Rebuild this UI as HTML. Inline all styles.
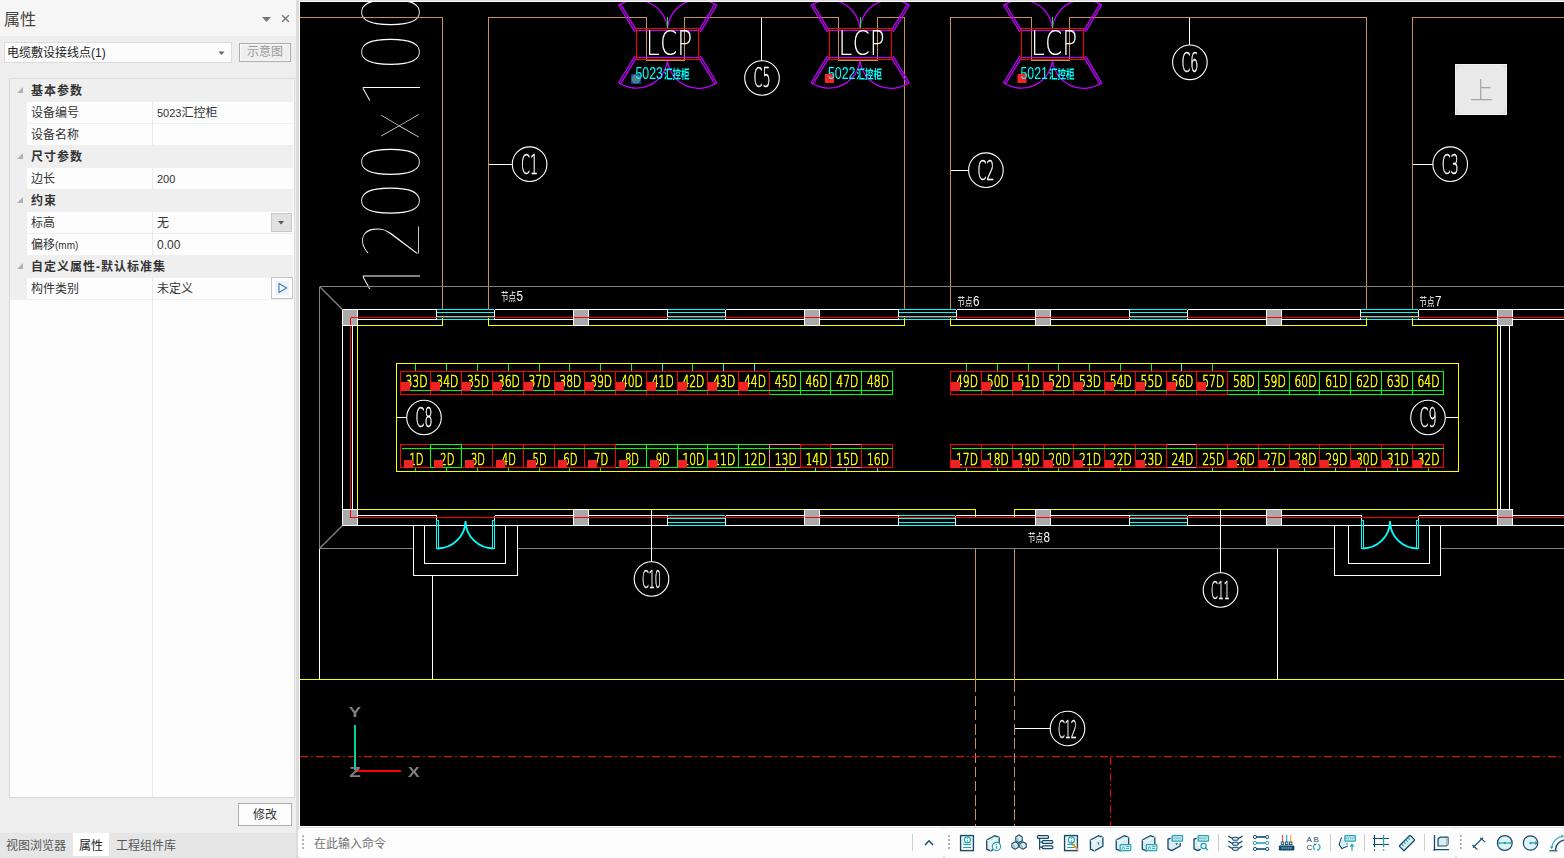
<!DOCTYPE html>
<html lang="zh-CN">
<head>
<meta charset="utf-8">
<title>属性</title>
<style>
html,body{margin:0;padding:0;}
body{width:1564px;height:858px;overflow:hidden;position:relative;background:#eeeeee;font-family:"Liberation Sans","Noto Sans CJK SC",sans-serif;font-size:12px;color:#333;}
.abs{position:absolute;}
#panel{left:0;top:0;width:296px;height:858px;background:#eeeeee;}
#ptitle{left:0;top:0;width:296px;height:36px;background:#f6f6f6;}
#ptitle .t{position:absolute;left:4px;top:9px;font-size:16px;line-height:22px;color:#444;}
#combo{left:4px;top:42px;width:228px;height:21px;background:#fcfcfc;border:1px solid #dcdcdc;box-sizing:border-box;}
#combo span{position:absolute;left:2px;top:1px;line-height:19px;font-size:12px;color:#222;}
#sybtn{left:239px;top:43px;width:52px;height:19px;box-sizing:border-box;border:1px solid #adadad;background:#efefef;color:#9a9a9a;font-size:12px;line-height:17px;text-align:center;box-shadow:inset 0 0 0 1px #f8f8f8;}
#grid{left:9px;top:78px;width:286px;height:720px;box-sizing:border-box;border:1px solid #dadada;background:#fdfdfd;}
.row{position:absolute;left:0;width:283px;height:22px;box-sizing:border-box;}
.cat{background:#efefef;height:23px;margin-top:-1px;padding-top:1px;font-weight:bold;color:#333;}
.cat span{position:absolute;left:21px;top:1px;line-height:22px;letter-spacing:1px;white-space:nowrap;}
.cat i{position:absolute;left:7px;top:8px;width:0;height:0;border-left:6px solid transparent;border-bottom:6px solid #b0b0b0;}
.pr{border-bottom:1px solid #f0f0f0;}
.pr:after{content:'';position:absolute;left:142px;top:0;width:1px;height:22px;background:#eaeaea;}
.pr .n{position:absolute;left:21px;top:0;line-height:22px;color:#333;}
.pr .v{position:absolute;left:147px;top:0;line-height:22px;color:#333;}
#gutter{left:0;top:0;width:17px;height:221px;background:#efefef;}
#split{left:142px;top:221px;width:1px;height:497px;background:#eaeaea;}
#tabs{left:0;top:833px;width:298px;height:25px;background:#e6e6e6;}
#tabs span{position:absolute;top:1px;line-height:24px;font-size:12px;color:#555;}
#cmd{left:298px;top:828px;width:1266px;height:30px;background:#fdfdfd;border-radius:4px 0 0 4px;}
.nolight .big{stroke-width:5.8px}
.nolight .lcp{stroke:#000;stroke-width:1.7px}
.nolight .cir{stroke-width:0}
.nolight .lab{stroke-width:0}
</style>
<script>
(function(){try{var c=document.createElement('canvas');c.width=60;c.height=120;var x=c.getContext('2d');
x.font='200 100px "DejaVu Sans Light","DejaVu Sans",sans-serif';x.fillStyle='#000';x.fillText('l',10,100);
var d=x.getImageData(0,50,60,1).data,n=0;for(var i=3;i<d.length;i+=4){if(d[i]>127)n++;}
if(n>7){document.documentElement.className='nolight';}}catch(e){}})();
</script>
</head>
<body>
<div id="panel" class="abs">
  <div id="ptitle" class="abs"><span class="t">属性</span>
    <svg class="abs" style="left:258px;top:10px" width="36" height="16" viewBox="258 10 36 16"><path d="M262 17h9l-4.5 5z" fill="#777"/><path d="M282.2 15.2l6.6 6.6M288.8 15.2l-6.6 6.6" stroke="#777" stroke-width="1.4" fill="none"/></svg>
  </div>
  <div id="combo" class="abs"><span>电缆敷设接线点(1)</span>
    <svg class="abs" style="left:213px;top:8px" width="8" height="5"><path d="M0.5 0.5h6l-3 3.5z" fill="#666"/></svg>
  </div>
  <div id="sybtn" class="abs">示意图</div>
  <div id="grid" class="abs">
    <div id="gutter" class="abs"></div>
    <div class="row cat" style="top:1px"><i></i><span>基本参数</span></div>
    <div class="row pr" style="top:23px"><span class="n">设备编号</span><span class="v"><span style="font-size:11px">5023</span>汇控柜</span></div>
    <div class="row pr" style="top:45px"><span class="n">设备名称</span></div>
    <div class="row cat" style="top:67px"><i></i><span>尺寸参数</span></div>
    <div class="row pr" style="top:89px"><span class="n">边长</span><span class="v" style="font-size:11px">200</span></div>
    <div class="row cat" style="top:111px"><i></i><span>约束</span></div>
    <div class="row pr" style="top:133px"><span class="n">标高</span><span class="v">无</span></div>
    <div class="row pr" style="top:155px"><span class="n">偏移<span style="font-size:10px">(mm)</span></span><span class="v">0.00</span></div>
    <div class="row cat" style="top:177px"><i></i><span>自定义属性-默认标准集</span></div>
    <div class="row pr" style="top:199px"><span class="n">构件类别</span><span class="v">未定义</span></div>
    <div id="split" class="abs"></div>
    <div class="abs" style="left:261px;top:134px;width:21px;height:19px;box-sizing:border-box;background:#e1e1e1;border:1px solid #c8c8c8;"><svg class="abs" style="left:6px;top:7px" width="7" height="4"><path d="M0 0h6l-3 3.5z" fill="#555"/></svg></div>
    <div class="abs" style="left:261px;top:198px;width:22px;height:22px;box-sizing:border-box;background:#fdfdfd;border:1px solid #c4c4c4;"><div class="abs" style="left:3px;top:3px;width:14px;height:14px;background:#eef2f6"></div><svg class="abs" style="left:5px;top:4px" width="12" height="12" viewBox="0 0 12 12"><path d="M2 1.5v9l7.5-4.5z" fill="#f4f9fd" stroke="#2f7fc0" stroke-width="1.1"/></svg></div>
  </div>
  <div class="abs" style="left:238px;top:803px;width:54px;height:23px;box-sizing:border-box;border:1px solid #adadad;background:#fdfdfd;text-align:center;line-height:23px;font-size:12px;color:#333;">修改</div>
  <div id="tabs" class="abs">
    <span style="left:6px">视图浏览器</span>
    <div class="abs" style="left:73px;top:0;width:36px;height:23px;background:#fff;"></div>
    <span style="left:79px;color:#222">属性</span>
    <span style="left:116px">工程组件库</span>
  </div>
</div>
<div class="abs" style="left:296px;top:0;width:1268px;height:858px;background:#dcdcdc;"></div>
<div class="abs" style="left:299px;top:1px;width:1265px;height:826px;background:#fff;"></div>
<div class="abs" style="left:300px;top:2px;width:1264px;height:824px;background:#000"></div>
<svg class="abs" style="left:300px;top:2px;will-change:transform" width="1264" height="824" viewBox="300 2 1264 824">
<clipPath id="nobase"><rect x="300" y="0" width="119.9" height="300"/></clipPath>
<g clip-path="url(#nobase)"><text transform="translate(424 277) rotate(-90) scale(0.78 1.078)" class="big" text-anchor="middle" font-size="79.5" fill="#fff" stroke="#000" stroke-width="2.4" font-weight="200" font-family="'DejaVu Sans Light','DejaVu Sans', sans-serif">1</text></g>
<text transform="translate(419.5 239) rotate(-90) scale(0.78 1)" class="big" text-anchor="middle" font-size="79.5" fill="#fff" stroke="#000" stroke-width="2.4" font-weight="200" font-family="'DejaVu Sans Light','DejaVu Sans', sans-serif">2</text>
<text transform="translate(419.5 200.5) rotate(-90) scale(0.78 1)" class="big" text-anchor="middle" font-size="79.5" fill="#fff" stroke="#000" stroke-width="2.4" font-weight="200" font-family="'DejaVu Sans Light','DejaVu Sans', sans-serif">0</text>
<text transform="translate(419.5 161.7) rotate(-90) scale(0.78 1)" class="big" text-anchor="middle" font-size="79.5" fill="#fff" stroke="#000" stroke-width="2.4" font-weight="200" font-family="'DejaVu Sans Light','DejaVu Sans', sans-serif">0</text>
<text transform="translate(419.5 125.7) rotate(-90) scale(0.78 1)" class="big" text-anchor="middle" font-size="72.3" fill="#fff" stroke="#000" stroke-width="2.4" font-weight="200" font-family="'DejaVu Sans Light','DejaVu Sans', sans-serif">x</text>
<g clip-path="url(#nobase)"><text transform="translate(424 88.6) rotate(-90) scale(0.78 1.078)" class="big" text-anchor="middle" font-size="79.5" fill="#fff" stroke="#000" stroke-width="2.4" font-weight="200" font-family="'DejaVu Sans Light','DejaVu Sans', sans-serif">1</text></g>
<text transform="translate(419.5 51.7) rotate(-90) scale(0.78 1)" class="big" text-anchor="middle" font-size="79.5" fill="#fff" stroke="#000" stroke-width="2.4" font-weight="200" font-family="'DejaVu Sans Light','DejaVu Sans', sans-serif">0</text>
<text transform="translate(419.5 12) rotate(-90) scale(0.78 1)" class="big" text-anchor="middle" font-size="79.5" fill="#fff" stroke="#000" stroke-width="2.4" font-weight="200" font-family="'DejaVu Sans Light','DejaVu Sans', sans-serif">0</text>
<g shape-rendering="crispEdges" fill="none">
<path d="M319.5 548.5L319.5 679.5" stroke="#ffffff" stroke-width="1" />
<path d="M432.5 575.5L432.5 679.5" stroke="#ffffff" stroke-width="1" />
<path d="M1277.5 548.5L1277.5 679.5" stroke="#ffffff" stroke-width="1" />
<path d="M300 679.5L1564 679.5" stroke="#ffff00" stroke-width="1" />
<path d="M357.5 509.5L975.5 509.5L975.5 517" stroke="#ffff00" stroke-width="1" fill="none" />
<path d="M1014.5 517L1014.5 509.5L1497.5 509.5" stroke="#ffff00" stroke-width="1" fill="none" />
<path d="M357.5 325.5L357.5 509.5" stroke="#ffff00" stroke-width="1" />
<path d="M1497.5 325.5L1497.5 509.5" stroke="#ffff00" stroke-width="1" />
<path d="M342.5 325.5L342.5 509.5" stroke="#ffffff" stroke-width="1" />
<path d="M352.5 325.5L352.5 509.5" stroke="#ffffff" stroke-width="1" />
<path d="M1500.5 325.5L1500.5 509.5" stroke="#ffffff" stroke-width="1" />
<path d="M1509.5 325.5L1509.5 509.5" stroke="#ffffff" stroke-width="1" />
<path d="M358.0 309.5L436.5 309.5" stroke="#ffffff" stroke-width="1" />
<path d="M358.0 319.5L436.5 319.5" stroke="#ffffff" stroke-width="1" />
<path d="M494.5 309.5L573.5 309.5" stroke="#ffffff" stroke-width="1" />
<path d="M494.5 319.5L573.5 319.5" stroke="#ffffff" stroke-width="1" />
<path d="M589.0 309.5L667.5 309.5" stroke="#ffffff" stroke-width="1" />
<path d="M589.0 319.5L667.5 319.5" stroke="#ffffff" stroke-width="1" />
<path d="M725.5 309.5L804.5 309.5" stroke="#ffffff" stroke-width="1" />
<path d="M725.5 319.5L804.5 319.5" stroke="#ffffff" stroke-width="1" />
<path d="M820.0 309.5L898.5 309.5" stroke="#ffffff" stroke-width="1" />
<path d="M820.0 319.5L898.5 319.5" stroke="#ffffff" stroke-width="1" />
<path d="M956.5 309.5L1035.5 309.5" stroke="#ffffff" stroke-width="1" />
<path d="M956.5 319.5L1035.5 319.5" stroke="#ffffff" stroke-width="1" />
<path d="M1051.0 309.5L1129.5 309.5" stroke="#ffffff" stroke-width="1" />
<path d="M1051.0 319.5L1129.5 319.5" stroke="#ffffff" stroke-width="1" />
<path d="M1187.5 309.5L1266.5 309.5" stroke="#ffffff" stroke-width="1" />
<path d="M1187.5 319.5L1266.5 319.5" stroke="#ffffff" stroke-width="1" />
<path d="M1282.0 309.5L1360.5 309.5" stroke="#ffffff" stroke-width="1" />
<path d="M1282.0 319.5L1360.5 319.5" stroke="#ffffff" stroke-width="1" />
<path d="M1418.5 309.5L1497.5 309.5" stroke="#ffffff" stroke-width="1" />
<path d="M1418.5 319.5L1497.5 319.5" stroke="#ffffff" stroke-width="1" />
<path d="M1513.0 309.5L1565 309.5" stroke="#ffffff" stroke-width="1" />
<path d="M1513.0 319.5L1565 319.5" stroke="#ffffff" stroke-width="1" />
<path d="M436.5 309.5L436.5 319.5" stroke="#ffffff" stroke-width="1" />
<path d="M494.5 309.5L494.5 319.5" stroke="#ffffff" stroke-width="1" />
<path d="M437.0 309.5L494.0 309.5" stroke="#00ffff" stroke-width="1" />
<path d="M437.0 312.5L494.0 312.5" stroke="#00ffff" stroke-width="1" />
<path d="M437.0 316.5L494.0 316.5" stroke="#00ffff" stroke-width="1" />
<path d="M437.0 319.5L494.0 319.5" stroke="#00ffff" stroke-width="1" />
<path d="M667.5 309.5L667.5 319.5" stroke="#ffffff" stroke-width="1" />
<path d="M725.5 309.5L725.5 319.5" stroke="#ffffff" stroke-width="1" />
<path d="M668.0 309.5L725.0 309.5" stroke="#00ffff" stroke-width="1" />
<path d="M668.0 312.5L725.0 312.5" stroke="#00ffff" stroke-width="1" />
<path d="M668.0 316.5L725.0 316.5" stroke="#00ffff" stroke-width="1" />
<path d="M668.0 319.5L725.0 319.5" stroke="#00ffff" stroke-width="1" />
<path d="M898.5 309.5L898.5 319.5" stroke="#ffffff" stroke-width="1" />
<path d="M956.5 309.5L956.5 319.5" stroke="#ffffff" stroke-width="1" />
<path d="M899.0 309.5L956.0 309.5" stroke="#00ffff" stroke-width="1" />
<path d="M899.0 312.5L956.0 312.5" stroke="#00ffff" stroke-width="1" />
<path d="M899.0 316.5L956.0 316.5" stroke="#00ffff" stroke-width="1" />
<path d="M899.0 319.5L956.0 319.5" stroke="#00ffff" stroke-width="1" />
<path d="M1129.5 309.5L1129.5 319.5" stroke="#ffffff" stroke-width="1" />
<path d="M1187.5 309.5L1187.5 319.5" stroke="#ffffff" stroke-width="1" />
<path d="M1130.0 309.5L1187.0 309.5" stroke="#00ffff" stroke-width="1" />
<path d="M1130.0 312.5L1187.0 312.5" stroke="#00ffff" stroke-width="1" />
<path d="M1130.0 316.5L1187.0 316.5" stroke="#00ffff" stroke-width="1" />
<path d="M1130.0 319.5L1187.0 319.5" stroke="#00ffff" stroke-width="1" />
<path d="M1360.5 309.5L1360.5 319.5" stroke="#ffffff" stroke-width="1" />
<path d="M1418.5 309.5L1418.5 319.5" stroke="#ffffff" stroke-width="1" />
<path d="M1361.0 309.5L1418.0 309.5" stroke="#00ffff" stroke-width="1" />
<path d="M1361.0 312.5L1418.0 312.5" stroke="#00ffff" stroke-width="1" />
<path d="M1361.0 316.5L1418.0 316.5" stroke="#00ffff" stroke-width="1" />
<path d="M1361.0 319.5L1418.0 319.5" stroke="#00ffff" stroke-width="1" />
<path d="M357.5 325.5L442.5 325.5L442.5 316" stroke="#ffff00" stroke-width="1" fill="none" />
<path d="M488.5 316L488.5 325.5L904.5 325.5L904.5 316" stroke="#ffff00" stroke-width="1" fill="none" />
<path d="M950.5 316L950.5 325.5L1366.5 325.5L1366.5 316" stroke="#ffff00" stroke-width="1" fill="none" />
<path d="M1412.5 316L1412.5 325.5L1497.5 325.5" stroke="#ffff00" stroke-width="1" fill="none" />
<path d="M358.0 515.5L436.5 515.5" stroke="#ffffff" stroke-width="1" />
<path d="M494.5 515.5L573.5 515.5" stroke="#ffffff" stroke-width="1" />
<path d="M589.0 515.5L667.5 515.5" stroke="#ffffff" stroke-width="1" />
<path d="M725.5 515.5L804.5 515.5" stroke="#ffffff" stroke-width="1" />
<path d="M820.0 515.5L898.5 515.5" stroke="#ffffff" stroke-width="1" />
<path d="M955.5 515.5L1035.5 515.5" stroke="#ffffff" stroke-width="1" />
<path d="M1051.0 515.5L1129.5 515.5" stroke="#ffffff" stroke-width="1" />
<path d="M1187.5 515.5L1266.5 515.5" stroke="#ffffff" stroke-width="1" />
<path d="M1282.0 515.5L1361.5 515.5" stroke="#ffffff" stroke-width="1" />
<path d="M1418.5 515.5L1497.5 515.5" stroke="#ffffff" stroke-width="1" />
<path d="M1513.0 515.5L1565 515.5" stroke="#ffffff" stroke-width="1" />
<path d="M342.5 525.5L1564 525.5" stroke="#ffffff" stroke-width="1" />
<path d="M436.5 515.5L436.5 525.5" stroke="#ffffff" stroke-width="1" />
<path d="M494.5 515.5L494.5 525.5" stroke="#ffffff" stroke-width="1" />
<path d="M667.5 515.5L667.5 525.5" stroke="#ffffff" stroke-width="1" />
<path d="M725.5 515.5L725.5 525.5" stroke="#ffffff" stroke-width="1" />
<path d="M898.5 515.5L898.5 525.5" stroke="#ffffff" stroke-width="1" />
<path d="M955.5 515.5L955.5 525.5" stroke="#ffffff" stroke-width="1" />
<path d="M1129.5 515.5L1129.5 525.5" stroke="#ffffff" stroke-width="1" />
<path d="M1187.5 515.5L1187.5 525.5" stroke="#ffffff" stroke-width="1" />
<path d="M1361.5 515.5L1361.5 525.5" stroke="#ffffff" stroke-width="1" />
<path d="M1418.5 515.5L1418.5 525.5" stroke="#ffffff" stroke-width="1" />
<path d="M668.0 515.5L725.0 515.5" stroke="#00ffff" stroke-width="1" />
<path d="M668.0 518.5L725.0 518.5" stroke="#00ffff" stroke-width="1" />
<path d="M668.0 522.5L725.0 522.5" stroke="#00ffff" stroke-width="1" />
<path d="M668.0 525.5L725.0 525.5" stroke="#00ffff" stroke-width="1" />
<path d="M899.0 515.5L955.0 515.5" stroke="#00ffff" stroke-width="1" />
<path d="M899.0 518.5L955.0 518.5" stroke="#00ffff" stroke-width="1" />
<path d="M899.0 522.5L955.0 522.5" stroke="#00ffff" stroke-width="1" />
<path d="M899.0 525.5L955.0 525.5" stroke="#00ffff" stroke-width="1" />
<path d="M1130.0 515.5L1187.0 515.5" stroke="#00ffff" stroke-width="1" />
<path d="M1130.0 518.5L1187.0 518.5" stroke="#00ffff" stroke-width="1" />
<path d="M1130.0 522.5L1187.0 522.5" stroke="#00ffff" stroke-width="1" />
<path d="M1130.0 525.5L1187.0 525.5" stroke="#00ffff" stroke-width="1" />
<path d="M1564 317.5L350.5 317.5L350.5 517.5L1564 517.5" stroke="#ff0000" stroke-width="1" fill="none" />
<rect x="342.5" y="309.5" width="15" height="16" fill="#a9a9a9" stroke="#ffffff"/>
<path d="M350.5 317.5L358.0 317.5" stroke="#ff0000" stroke-width="1" />
<rect x="342.5" y="509.5" width="15" height="16" fill="#a9a9a9" stroke="#ffffff"/>
<path d="M350.5 517.5L358.0 517.5" stroke="#ff0000" stroke-width="1" />
<rect x="573.5" y="309.5" width="15" height="16" fill="#a9a9a9" stroke="#ffffff"/>
<path d="M574.0 317.5L589.0 317.5" stroke="#ff0000" stroke-width="1" />
<rect x="573.5" y="509.5" width="15" height="16" fill="#a9a9a9" stroke="#ffffff"/>
<path d="M574.0 517.5L589.0 517.5" stroke="#ff0000" stroke-width="1" />
<rect x="804.5" y="309.5" width="15" height="16" fill="#a9a9a9" stroke="#ffffff"/>
<path d="M805.0 317.5L820.0 317.5" stroke="#ff0000" stroke-width="1" />
<rect x="804.5" y="509.5" width="15" height="16" fill="#a9a9a9" stroke="#ffffff"/>
<path d="M805.0 517.5L820.0 517.5" stroke="#ff0000" stroke-width="1" />
<rect x="1035.5" y="309.5" width="15" height="16" fill="#a9a9a9" stroke="#ffffff"/>
<path d="M1036.0 317.5L1051.0 317.5" stroke="#ff0000" stroke-width="1" />
<rect x="1035.5" y="509.5" width="15" height="16" fill="#a9a9a9" stroke="#ffffff"/>
<path d="M1036.0 517.5L1051.0 517.5" stroke="#ff0000" stroke-width="1" />
<rect x="1266.5" y="309.5" width="15" height="16" fill="#a9a9a9" stroke="#ffffff"/>
<path d="M1267.0 317.5L1282.0 317.5" stroke="#ff0000" stroke-width="1" />
<rect x="1266.5" y="509.5" width="15" height="16" fill="#a9a9a9" stroke="#ffffff"/>
<path d="M1267.0 517.5L1282.0 517.5" stroke="#ff0000" stroke-width="1" />
<rect x="1497.5" y="309.5" width="15" height="16" fill="#a9a9a9" stroke="#ffffff"/>
<path d="M1498.0 317.5L1513.0 317.5" stroke="#ff0000" stroke-width="1" />
<rect x="1497.5" y="509.5" width="15" height="16" fill="#a9a9a9" stroke="#ffffff"/>
<path d="M1498.0 517.5L1513.0 517.5" stroke="#ff0000" stroke-width="1" />
<path d="M350.5 317.5L350.5 325" stroke="#ff0000" stroke-width="1" />
<path d="M350.5 510L350.5 517.5" stroke="#ff0000" stroke-width="1" />
<path d="M300 17.5L442.5 17.5L442.5 310" stroke="#c8915a" stroke-width="1" fill="none" />
<path d="M488.5 310L488.5 17.5L646.5 17.5L646.5 60.5L684.5 60.5L684.5 17.5L838.5 17.5L838.5 60.5L877.5 60.5L877.5 17.5L904.5 17.5L904.5 310" stroke="#c8915a" stroke-width="1" fill="none" />
<path d="M950.5 310L950.5 17.5L1031.5 17.5L1031.5 60.5L1069.5 60.5L1069.5 17.5L1366.5 17.5L1366.5 310" stroke="#c8915a" stroke-width="1" fill="none" />
<path d="M1412.5 310L1412.5 17.5L1564 17.5" stroke="#c8915a" stroke-width="1" fill="none" />
<path d="M975.5 548.5L975.5 682" stroke="#c8915a" stroke-width="1" />
<path d="M975.5 667.3L975.5 826" stroke="#c8915a" stroke-width="1" stroke-dasharray="10.5 3.7"/>
<path d="M1014.5 548.5L1014.5 682" stroke="#c8915a" stroke-width="1" />
<path d="M1014.5 667.3L1014.5 826" stroke="#c8915a" stroke-width="1" stroke-dasharray="10.5 3.7"/>
<path d="M319.5 286.5L1564 286.5" stroke="#808080" stroke-width="1" />
<path d="M319.5 286.5L319.5 548.5" stroke="#808080" stroke-width="1" />
<path d="M319.5 548.5L413.5 548.5" stroke="#808080" stroke-width="1" />
<path d="M517.5 548.5L1334.5 548.5" stroke="#808080" stroke-width="1" />
<path d="M1440.5 548.5L1564 548.5" stroke="#808080" stroke-width="1" />
<path d="M413.5 525.5L413.5 575.5L517.5 575.5L517.5 525.5" stroke="#ffffff" stroke-width="1" fill="none" />
<path d="M424.5 525.5L424.5 563.5L505.5 563.5L505.5 525.5" stroke="#ffffff" stroke-width="1" fill="none" />
<path d="M1334.5 525.5L1334.5 575.5L1440.5 575.5L1440.5 525.5" stroke="#ffffff" stroke-width="1" fill="none" />
<path d="M1348.5 525.5L1348.5 563.5L1429.5 563.5L1429.5 525.5" stroke="#ffffff" stroke-width="1" fill="none" />
</g>
<path d="M319.5 286.5L342.5 309.5M319.5 548.5L342.5 525.5" stroke="#808080" stroke-width="1.4" fill="none"/>
<g stroke="#00ffff" fill="none"><path shape-rendering="crispEdges" d="M436.5 520.5H438.5V548.5H436.5ZM494.5 520.5H492.5V548.5H494.5Z" stroke-width="1"/><path d="M437.5 548.5A28.0 28.0 0 0 0 465.5 521M493.5 548.5A28.0 28.0 0 0 1 465.5 521" stroke-width="1.8"/></g>
<g stroke="#00ffff" fill="none"><path shape-rendering="crispEdges" d="M1361.5 520.5H1363.5V548.5H1361.5ZM1418.5 520.5H1416.5V548.5H1418.5Z" stroke-width="1"/><path d="M1362.5 548.5A27.5 27.5 0 0 0 1390.0 521M1417.5 548.5A27.5 27.5 0 0 1 1390.0 521" stroke-width="1.8"/></g>
<path d="M636.8 30.9L620.5 4.1L618.7 5.3L635.0 32.1M619.6 4.7A31.4 31.4 0 0 1 667.5 28.5M635.0 55.9L618.7 82.7L620.5 83.9L636.8 57.1M619.6 83.3A31.4 31.4 0 0 0 667.5 60.5M700.4 32.1L716.7 5.3L714.9 4.1L698.6 30.9M715.8 4.7A31.4 31.4 0 0 0 667.5 28.5M698.6 57.1L714.9 83.9L716.7 82.7L700.4 55.9M715.8 83.3A31.4 31.4 0 0 1 667.5 60.5" stroke="#c000ff" stroke-width="1.3" fill="none"/>
<g shape-rendering="crispEdges" fill="none"><path d="M636.5 30.5H698.5M636.5 57.5H698.5" stroke="#c000ff"/><rect x="636.5" y="28.5" width="62" height="31" stroke="#ff0000"/><path d="M667.5 17V28" stroke="#00ff00"/></g>
<path d="M829.3 30.9L813.0 4.1L811.2 5.3L827.5 32.1M812.1 4.7A31.4 31.4 0 0 1 860.0 28.5M827.5 55.9L811.2 82.7L813.0 83.9L829.3 57.1M812.1 83.3A31.4 31.4 0 0 0 860.0 60.5M892.9 32.1L909.2 5.3L907.4 4.1L891.1 30.9M908.3 4.7A31.4 31.4 0 0 0 860.0 28.5M891.1 57.1L907.4 83.9L909.2 82.7L892.9 55.9M908.3 83.3A31.4 31.4 0 0 1 860.0 60.5" stroke="#c000ff" stroke-width="1.3" fill="none"/>
<g shape-rendering="crispEdges" fill="none"><path d="M829.0 30.5H891.0M829.0 57.5H891.0" stroke="#c000ff"/><rect x="829.0" y="28.5" width="62" height="31" stroke="#ff0000"/><path d="M860 17V28" stroke="#00ff00"/></g>
<path d="M1021.8 30.9L1005.5 4.1L1003.7 5.3L1020.0 32.1M1004.6 4.7A31.4 31.4 0 0 1 1052.5 28.5M1020.0 55.9L1003.7 82.7L1005.5 83.9L1021.8 57.1M1004.6 83.3A31.4 31.4 0 0 0 1052.5 60.5M1085.4 32.1L1101.7 5.3L1099.9 4.1L1083.6 30.9M1100.8 4.7A31.4 31.4 0 0 0 1052.5 28.5M1083.6 57.1L1099.9 83.9L1101.7 82.7L1085.4 55.9M1100.8 83.3A31.4 31.4 0 0 1 1052.5 60.5" stroke="#c000ff" stroke-width="1.3" fill="none"/>
<g shape-rendering="crispEdges" fill="none"><path d="M1021.5 30.5H1083.5M1021.5 57.5H1083.5" stroke="#c000ff"/><rect x="1021.5" y="28.5" width="62" height="31" stroke="#ff0000"/><path d="M1052.5 17V28" stroke="#00ff00"/></g>
<text x="646.1" y="55" class="lcp" font-size="33" textLength="46" lengthAdjust="spacingAndGlyphs" fill="#fff" font-weight="200" font-family="'DejaVu Sans Light','DejaVu Sans', sans-serif">LCP</text>
<rect x="631.0" y="74" width="10" height="10" fill="#0a3cb4"/><circle cx="636.0" cy="79" r="4.6" fill="#4d8080"/>
<text x="635.5" y="78.5" font-size="16.5" textLength="27.5" lengthAdjust="spacingAndGlyphs" fill="#00ffff" font-family="'Liberation Sans', sans-serif">5023</text>
<text x="664.0" y="78.5" font-size="12.5" textLength="25.5" lengthAdjust="spacingAndGlyphs" fill="#00ffff" font-weight="bold" font-family="'Liberation Sans','Noto Sans CJK SC', sans-serif">汇控柜</text>
<text x="838.6" y="55" class="lcp" font-size="33" textLength="46" lengthAdjust="spacingAndGlyphs" fill="#fff" font-weight="200" font-family="'DejaVu Sans Light','DejaVu Sans', sans-serif">LCP</text>
<rect x="825" y="74" width="9" height="9" fill="#ff2020"/>
<text x="828" y="78.5" font-size="16.5" textLength="27.5" lengthAdjust="spacingAndGlyphs" fill="#00ffff" font-family="'Liberation Sans', sans-serif">5022</text>
<text x="856.5" y="78.5" font-size="12.5" textLength="25.5" lengthAdjust="spacingAndGlyphs" fill="#00ffff" font-weight="bold" font-family="'Liberation Sans','Noto Sans CJK SC', sans-serif">汇控柜</text>
<text x="1031.1" y="55" class="lcp" font-size="33" textLength="46" lengthAdjust="spacingAndGlyphs" fill="#fff" font-weight="200" font-family="'DejaVu Sans Light','DejaVu Sans', sans-serif">LCP</text>
<rect x="1017.5" y="74" width="9" height="9" fill="#ff2020"/>
<text x="1020.5" y="78.5" font-size="16.5" textLength="27.5" lengthAdjust="spacingAndGlyphs" fill="#00ffff" font-family="'Liberation Sans', sans-serif">5021</text>
<text x="1049.0" y="78.5" font-size="12.5" textLength="25.5" lengthAdjust="spacingAndGlyphs" fill="#00ffff" font-weight="bold" font-family="'Liberation Sans','Noto Sans CJK SC', sans-serif">汇控柜</text>
<path d="M488.5 164.5L512 164.5" stroke="#fff" shape-rendering="crispEdges"/>
<circle cx="529.6" cy="164.2" r="17.3" stroke="#fff" stroke-width="1.1" fill="none"/>
<text x="521.1" y="173.617" font-size="25.8" textLength="17" class="cir" lengthAdjust="spacingAndGlyphs" fill="#fff" stroke="#fff" stroke-width="0.5" font-weight="200" font-family="'DejaVu Sans Light','DejaVu Sans', sans-serif">C1</text>
<path d="M950.5 170.5L968 170.5" stroke="#fff" shape-rendering="crispEdges"/>
<circle cx="985.9" cy="170.2" r="17.3" stroke="#fff" stroke-width="1.1" fill="none"/>
<text x="977.4" y="179.617" font-size="25.8" textLength="17" class="cir" lengthAdjust="spacingAndGlyphs" fill="#fff" stroke="#fff" stroke-width="0.5" font-weight="200" font-family="'DejaVu Sans Light','DejaVu Sans', sans-serif">C2</text>
<path d="M1412.5 164.5L1433 164.5" stroke="#fff" shape-rendering="crispEdges"/>
<circle cx="1450.2" cy="164.2" r="17.3" stroke="#fff" stroke-width="1.1" fill="none"/>
<text x="1441.7" y="173.617" font-size="25.8" textLength="17" class="cir" lengthAdjust="spacingAndGlyphs" fill="#fff" stroke="#fff" stroke-width="0.5" font-weight="200" font-family="'DejaVu Sans Light','DejaVu Sans', sans-serif">C3</text>
<path d="M761.5 17.5L761.5 60.5" stroke="#fff" shape-rendering="crispEdges"/>
<circle cx="762" cy="78" r="17.3" stroke="#fff" stroke-width="1.1" fill="none"/>
<text x="753.5" y="87.417" font-size="25.8" textLength="17" class="cir" lengthAdjust="spacingAndGlyphs" fill="#fff" stroke="#fff" stroke-width="0.5" font-weight="200" font-family="'DejaVu Sans Light','DejaVu Sans', sans-serif">C5</text>
<path d="M1189.5 17.5L1189.5 45" stroke="#fff" shape-rendering="crispEdges"/>
<circle cx="1189.9" cy="62.3" r="17.3" stroke="#fff" stroke-width="1.1" fill="none"/>
<text x="1181.4" y="71.717" font-size="25.8" textLength="17" class="cir" lengthAdjust="spacingAndGlyphs" fill="#fff" stroke="#fff" stroke-width="0.5" font-weight="200" font-family="'DejaVu Sans Light','DejaVu Sans', sans-serif">C6</text>
<path d="M396.5 417.5L406.5 417.5" stroke="#fff" shape-rendering="crispEdges"/>
<circle cx="424" cy="417.5" r="17.3" stroke="#fff" stroke-width="1.1" fill="none"/>
<text x="415.5" y="426.917" font-size="25.8" textLength="17" class="cir" lengthAdjust="spacingAndGlyphs" fill="#fff" stroke="#fff" stroke-width="0.5" font-weight="200" font-family="'DejaVu Sans Light','DejaVu Sans', sans-serif">C8</text>
<path d="M1445.5 417.5L1458.5 417.5" stroke="#fff" shape-rendering="crispEdges"/>
<circle cx="1428" cy="417.5" r="17.3" stroke="#fff" stroke-width="1.1" fill="none"/>
<text x="1419.5" y="426.917" font-size="25.8" textLength="17" class="cir" lengthAdjust="spacingAndGlyphs" fill="#fff" stroke="#fff" stroke-width="0.5" font-weight="200" font-family="'DejaVu Sans Light','DejaVu Sans', sans-serif">C9</text>
<path d="M651.5 509.5L651.5 561.5" stroke="#fff" shape-rendering="crispEdges"/>
<circle cx="651.5" cy="579" r="17.3" stroke="#fff" stroke-width="1.1" fill="none"/>
<text x="642.0" y="588.125" font-size="25" textLength="19" class="cir" lengthAdjust="spacingAndGlyphs" fill="#fff" stroke="#fff" stroke-width="0.5" font-weight="200" font-family="'DejaVu Sans Light','DejaVu Sans', sans-serif">C10</text>
<path d="M1220.5 509.5L1220.5 572.5" stroke="#fff" shape-rendering="crispEdges"/>
<circle cx="1220.5" cy="590" r="17.3" stroke="#fff" stroke-width="1.1" fill="none"/>
<text x="1211.0" y="599.125" font-size="25" textLength="19" class="cir" lengthAdjust="spacingAndGlyphs" fill="#fff" stroke="#fff" stroke-width="0.5" font-weight="200" font-family="'DejaVu Sans Light','DejaVu Sans', sans-serif">C11</text>
<path d="M1014.5 728.5L1050.5 728.5" stroke="#fff" shape-rendering="crispEdges"/>
<circle cx="1067.5" cy="728.5" r="17.3" stroke="#fff" stroke-width="1.1" fill="none"/>
<text x="1058.0" y="737.625" font-size="25" textLength="19" class="cir" lengthAdjust="spacingAndGlyphs" fill="#fff" stroke="#fff" stroke-width="0.5" font-weight="200" font-family="'DejaVu Sans Light','DejaVu Sans', sans-serif">C12</text>
<text x="501" y="300.7" font-size="11" textLength="15" lengthAdjust="spacingAndGlyphs" fill="#fff" font-family="'Liberation Sans','Noto Sans CJK SC', sans-serif">节点</text>
<text x="516.5" y="300.7" font-size="15.5" textLength="6.5" lengthAdjust="spacingAndGlyphs" fill="#fff" font-family="'Liberation Sans', sans-serif">5</text>
<text x="957.5" y="306" font-size="11" textLength="15" lengthAdjust="spacingAndGlyphs" fill="#fff" font-family="'Liberation Sans','Noto Sans CJK SC', sans-serif">节点</text>
<text x="973.0" y="306" font-size="15.5" textLength="6.5" lengthAdjust="spacingAndGlyphs" fill="#fff" font-family="'Liberation Sans', sans-serif">6</text>
<text x="1419.5" y="306.3" font-size="11" textLength="15" lengthAdjust="spacingAndGlyphs" fill="#fff" font-family="'Liberation Sans','Noto Sans CJK SC', sans-serif">节点</text>
<text x="1435.0" y="306.3" font-size="15.5" textLength="6.5" lengthAdjust="spacingAndGlyphs" fill="#fff" font-family="'Liberation Sans', sans-serif">7</text>
<text x="1028" y="541.5" font-size="11" textLength="15" lengthAdjust="spacingAndGlyphs" fill="#fff" font-family="'Liberation Sans','Noto Sans CJK SC', sans-serif">节点</text>
<text x="1043.5" y="541.5" font-size="15.5" textLength="6.5" lengthAdjust="spacingAndGlyphs" fill="#fff" font-family="'Liberation Sans', sans-serif">8</text>
<g shape-rendering="crispEdges" fill="none">
<rect x="396.5" y="363.5" width="1062" height="108" fill="none" stroke="#ffff00"/>
<rect x="769.5" y="371.5" width="31.0" height="23.0" fill="none" stroke="#00ff00"/>
<rect x="800.5" y="371.5" width="30.0" height="23.0" fill="none" stroke="#00ff00"/>
<rect x="830.5" y="371.5" width="31.0" height="23.0" fill="none" stroke="#00ff00"/>
<rect x="861.5" y="371.5" width="31.0" height="23.0" fill="none" stroke="#00ff00"/>
<rect x="400.5" y="371.5" width="30.0" height="23.0" fill="none" stroke="#ff0000"/>
<rect x="430.5" y="371.5" width="31.0" height="23.0" fill="none" stroke="#ff0000"/>
<rect x="461.5" y="371.5" width="31.0" height="23.0" fill="none" stroke="#ff0000"/>
<rect x="492.5" y="371.5" width="31.0" height="23.0" fill="none" stroke="#ff0000"/>
<rect x="523.5" y="371.5" width="31.0" height="23.0" fill="none" stroke="#ff0000"/>
<rect x="554.5" y="371.5" width="30.0" height="23.0" fill="none" stroke="#ff0000"/>
<rect x="584.5" y="371.5" width="31.0" height="23.0" fill="none" stroke="#ff0000"/>
<rect x="615.5" y="371.5" width="31.0" height="23.0" fill="none" stroke="#ff0000"/>
<rect x="646.5" y="371.5" width="31.0" height="23.0" fill="none" stroke="#ff0000"/>
<rect x="677.5" y="371.5" width="30.0" height="23.0" fill="none" stroke="#ff0000"/>
<rect x="707.5" y="371.5" width="31.0" height="23.0" fill="none" stroke="#ff0000"/>
<rect x="738.5" y="371.5" width="31.0" height="23.0" fill="none" stroke="#ff0000"/>
<path d="M401.5 390.5L431.5 390.5" stroke="#00ff00" stroke-width="1" />
<path d="M415.5 364L415.5 371" stroke="#00ff00" stroke-width="1" />
<path d="M431.5 390.5L462.5 390.5" stroke="#00ff00" stroke-width="1" />
<path d="M446.5 364L446.5 371" stroke="#00ff00" stroke-width="1" />
<path d="M462.5 390.5L493.5 390.5" stroke="#00ff00" stroke-width="1" />
<path d="M477.5 364L477.5 371" stroke="#00ff00" stroke-width="1" />
<path d="M493.5 390.5L524.5 390.5" stroke="#00ff00" stroke-width="1" />
<path d="M508.5 364L508.5 371" stroke="#00ff00" stroke-width="1" />
<path d="M524.5 390.5L555.5 390.5" stroke="#00ff00" stroke-width="1" />
<path d="M539.5 364L539.5 371" stroke="#00ff00" stroke-width="1" />
<path d="M555.5 390.5L585.5 390.5" stroke="#00ff00" stroke-width="1" />
<path d="M569.5 364L569.5 371" stroke="#00ff00" stroke-width="1" />
<path d="M585.5 390.5L616.5 390.5" stroke="#00ff00" stroke-width="1" />
<path d="M600.5 364L600.5 371" stroke="#00ff00" stroke-width="1" />
<path d="M616.5 390.5L647.5 390.5" stroke="#00ff00" stroke-width="1" />
<path d="M631.5 364L631.5 371" stroke="#00ff00" stroke-width="1" />
<path d="M647.5 390.5L678.5 390.5" stroke="#00ff00" stroke-width="1" />
<path d="M662.5 364L662.5 371" stroke="#00ffff" stroke-width="1" />
<path d="M678.5 390.5L708.5 390.5" stroke="#00ff00" stroke-width="1" />
<path d="M692.5 364L692.5 371" stroke="#00ff00" stroke-width="1" />
<path d="M708.5 390.5L739.5 390.5" stroke="#00ff00" stroke-width="1" />
<path d="M723.5 364L723.5 371" stroke="#00ffff" stroke-width="1" />
<path d="M739.5 390.5L770.5 390.5" stroke="#00ff00" stroke-width="1" />
<path d="M754.5 364L754.5 371" stroke="#00ffff" stroke-width="1" />
<path d="M770.5 390.5L801.5 390.5" stroke="#00ff00" stroke-width="1" />
<path d="M801.5 390.5L831.5 390.5" stroke="#00ff00" stroke-width="1" />
<path d="M831.5 390.5L862.5 390.5" stroke="#00ff00" stroke-width="1" />
<path d="M862.5 390.5L892.5 390.5" stroke="#00ff00" stroke-width="1" />
<rect x="430.5" y="444.5" width="31.0" height="23.0" fill="none" stroke="#00ff00"/>
<rect x="615.5" y="444.5" width="31.0" height="23.0" fill="none" stroke="#00ff00"/>
<rect x="646.5" y="444.5" width="31.0" height="23.0" fill="none" stroke="#00ff00"/>
<rect x="677.5" y="444.5" width="30.0" height="23.0" fill="none" stroke="#00ff00"/>
<rect x="707.5" y="444.5" width="31.0" height="23.0" fill="none" stroke="#00ff00"/>
<rect x="738.5" y="444.5" width="31.0" height="23.0" fill="none" stroke="#00ff00"/>
<rect x="769.5" y="444.5" width="31.0" height="23.0" fill="none" stroke="#ff80a8"/>
<rect x="830.5" y="444.5" width="31.0" height="23.0" fill="none" stroke="#ff80a8"/>
<rect x="400.5" y="444.5" width="30.0" height="23.0" fill="none" stroke="#ff0000"/>
<rect x="461.5" y="444.5" width="31.0" height="23.0" fill="none" stroke="#ff0000"/>
<rect x="492.5" y="444.5" width="31.0" height="23.0" fill="none" stroke="#ff0000"/>
<rect x="523.5" y="444.5" width="31.0" height="23.0" fill="none" stroke="#ff0000"/>
<rect x="554.5" y="444.5" width="30.0" height="23.0" fill="none" stroke="#ff0000"/>
<rect x="584.5" y="444.5" width="31.0" height="23.0" fill="none" stroke="#ff0000"/>
<rect x="800.5" y="444.5" width="30.0" height="23.0" fill="none" stroke="#ff0000"/>
<rect x="861.5" y="444.5" width="31.0" height="23.0" fill="none" stroke="#ff0000"/>
<path d="M401.5 448.5L431.5 448.5" stroke="#00ff00" stroke-width="1" />
<path d="M415.5 468L415.5 471" stroke="#00ff00" stroke-width="1" />
<rect x="430.5" y="444.5" width="31.0" height="23.0" fill="none" stroke="#00ff00"/>
<path d="M431.5 448.5L462.5 448.5" stroke="#00ff00" stroke-width="1" />
<path d="M446.5 468L446.5 471" stroke="#00ff00" stroke-width="1" />
<path d="M462.5 448.5L493.5 448.5" stroke="#00ff00" stroke-width="1" />
<path d="M477.5 468L477.5 471" stroke="#00ff00" stroke-width="1" />
<path d="M493.5 448.5L524.5 448.5" stroke="#00ff00" stroke-width="1" />
<path d="M508.5 468L508.5 471" stroke="#00ff00" stroke-width="1" />
<path d="M524.5 448.5L555.5 448.5" stroke="#00ff00" stroke-width="1" />
<path d="M539.5 468L539.5 471" stroke="#00ff00" stroke-width="1" />
<path d="M555.5 448.5L585.5 448.5" stroke="#00ff00" stroke-width="1" />
<path d="M569.5 468L569.5 471" stroke="#00ff00" stroke-width="1" />
<path d="M585.5 448.5L616.5 448.5" stroke="#00ff00" stroke-width="1" />
<path d="M600.5 468L600.5 471" stroke="#00ff00" stroke-width="1" />
<path d="M616.5 448.5L647.5 448.5" stroke="#00ff00" stroke-width="1" />
<path d="M647.5 448.5L678.5 448.5" stroke="#00ff00" stroke-width="1" />
<path d="M678.5 448.5L708.5 448.5" stroke="#00ff00" stroke-width="1" />
<path d="M708.5 448.5L739.5 448.5" stroke="#00ff00" stroke-width="1" />
<path d="M739.5 448.5L770.5 448.5" stroke="#00ff00" stroke-width="1" />
<path d="M770.5 448.5L801.5 448.5" stroke="#00ff00" stroke-width="1" />
<path d="M785.5 468L785.5 471" stroke="#00ff00" stroke-width="1" />
<path d="M801.5 448.5L831.5 448.5" stroke="#00ff00" stroke-width="1" />
<path d="M815.5 468L815.5 471" stroke="#00ffff" stroke-width="1" />
<path d="M831.5 448.5L862.5 448.5" stroke="#00ff00" stroke-width="1" />
<path d="M846.5 468L846.5 471" stroke="#00ff00" stroke-width="1" />
<path d="M862.5 448.5L892.5 448.5" stroke="#00ff00" stroke-width="1" />
<path d="M877.5 468L877.5 471" stroke="#00ffff" stroke-width="1" />
<rect x="1227.5" y="371.5" width="31.0" height="23.0" fill="none" stroke="#00ff00"/>
<rect x="1258.5" y="371.5" width="31.0" height="23.0" fill="none" stroke="#00ff00"/>
<rect x="1289.5" y="371.5" width="30.0" height="23.0" fill="none" stroke="#00ff00"/>
<rect x="1319.5" y="371.5" width="31.0" height="23.0" fill="none" stroke="#00ff00"/>
<rect x="1350.5" y="371.5" width="31.0" height="23.0" fill="none" stroke="#00ff00"/>
<rect x="1381.5" y="371.5" width="31.0" height="23.0" fill="none" stroke="#00ff00"/>
<rect x="1412.5" y="371.5" width="31.0" height="23.0" fill="none" stroke="#00ff00"/>
<rect x="950.5" y="371.5" width="31.0" height="23.0" fill="none" stroke="#ff0000"/>
<rect x="981.5" y="371.5" width="31.0" height="23.0" fill="none" stroke="#ff0000"/>
<rect x="1012.5" y="371.5" width="31.0" height="23.0" fill="none" stroke="#ff0000"/>
<rect x="1043.5" y="371.5" width="30.0" height="23.0" fill="none" stroke="#ff0000"/>
<rect x="1073.5" y="371.5" width="31.0" height="23.0" fill="none" stroke="#ff0000"/>
<rect x="1104.5" y="371.5" width="31.0" height="23.0" fill="none" stroke="#ff0000"/>
<rect x="1135.5" y="371.5" width="31.0" height="23.0" fill="none" stroke="#ff0000"/>
<rect x="1166.5" y="371.5" width="30.0" height="23.0" fill="none" stroke="#ff0000"/>
<rect x="1196.5" y="371.5" width="31.0" height="23.0" fill="none" stroke="#ff0000"/>
<path d="M951.5 390.5L982.5 390.5" stroke="#00ff00" stroke-width="1" />
<path d="M966.5 364L966.5 371" stroke="#00ff00" stroke-width="1" />
<path d="M982.5 390.5L1013.5 390.5" stroke="#00ff00" stroke-width="1" />
<path d="M997.5 364L997.5 371" stroke="#00ff00" stroke-width="1" />
<path d="M1013.5 390.5L1044.5 390.5" stroke="#00ff00" stroke-width="1" />
<path d="M1028.5 364L1028.5 371" stroke="#00ff00" stroke-width="1" />
<path d="M1044.5 390.5L1074.5 390.5" stroke="#00ff00" stroke-width="1" />
<path d="M1058.5 364L1058.5 371" stroke="#00ff00" stroke-width="1" />
<path d="M1074.5 390.5L1105.5 390.5" stroke="#00ff00" stroke-width="1" />
<path d="M1089.5 364L1089.5 371" stroke="#00ff00" stroke-width="1" />
<path d="M1105.5 390.5L1136.5 390.5" stroke="#00ff00" stroke-width="1" />
<path d="M1120.5 364L1120.5 371" stroke="#00ff00" stroke-width="1" />
<path d="M1136.5 390.5L1167.5 390.5" stroke="#00ff00" stroke-width="1" />
<path d="M1151.5 364L1151.5 371" stroke="#00ff00" stroke-width="1" />
<path d="M1167.5 390.5L1197.5 390.5" stroke="#00ff00" stroke-width="1" />
<path d="M1181.5 364L1181.5 371" stroke="#00ffff" stroke-width="1" />
<path d="M1197.5 390.5L1228.5 390.5" stroke="#00ff00" stroke-width="1" />
<path d="M1212.5 364L1212.5 371" stroke="#00ff00" stroke-width="1" />
<path d="M1228.5 390.5L1259.5 390.5" stroke="#00ff00" stroke-width="1" />
<path d="M1259.5 390.5L1290.5 390.5" stroke="#00ff00" stroke-width="1" />
<path d="M1290.5 390.5L1320.5 390.5" stroke="#00ff00" stroke-width="1" />
<path d="M1320.5 390.5L1351.5 390.5" stroke="#00ff00" stroke-width="1" />
<path d="M1351.5 390.5L1382.5 390.5" stroke="#00ff00" stroke-width="1" />
<path d="M1382.5 390.5L1413.5 390.5" stroke="#00ff00" stroke-width="1" />
<path d="M1413.5 390.5L1443.5 390.5" stroke="#00ff00" stroke-width="1" />
<rect x="1166.5" y="444.5" width="30.0" height="23.0" fill="none" stroke="#ff80a8"/>
<rect x="950.5" y="444.5" width="31.0" height="23.0" fill="none" stroke="#ff0000"/>
<rect x="981.5" y="444.5" width="31.0" height="23.0" fill="none" stroke="#ff0000"/>
<rect x="1012.5" y="444.5" width="31.0" height="23.0" fill="none" stroke="#ff0000"/>
<rect x="1043.5" y="444.5" width="30.0" height="23.0" fill="none" stroke="#ff0000"/>
<rect x="1073.5" y="444.5" width="31.0" height="23.0" fill="none" stroke="#ff0000"/>
<rect x="1104.5" y="444.5" width="31.0" height="23.0" fill="none" stroke="#ff0000"/>
<rect x="1135.5" y="444.5" width="31.0" height="23.0" fill="none" stroke="#ff0000"/>
<rect x="1196.5" y="444.5" width="31.0" height="23.0" fill="none" stroke="#ff0000"/>
<rect x="1227.5" y="444.5" width="31.0" height="23.0" fill="none" stroke="#ff0000"/>
<rect x="1258.5" y="444.5" width="31.0" height="23.0" fill="none" stroke="#ff0000"/>
<rect x="1289.5" y="444.5" width="30.0" height="23.0" fill="none" stroke="#ff0000"/>
<rect x="1319.5" y="444.5" width="31.0" height="23.0" fill="none" stroke="#ff0000"/>
<rect x="1350.5" y="444.5" width="31.0" height="23.0" fill="none" stroke="#ff0000"/>
<rect x="1381.5" y="444.5" width="31.0" height="23.0" fill="none" stroke="#ff0000"/>
<rect x="1412.5" y="444.5" width="31.0" height="23.0" fill="none" stroke="#ff0000"/>
<path d="M951.5 448.5L982.5 448.5" stroke="#00ff00" stroke-width="1" />
<path d="M966.5 468L966.5 471" stroke="#00ff00" stroke-width="1" />
<path d="M982.5 448.5L1013.5 448.5" stroke="#00ff00" stroke-width="1" />
<path d="M997.5 468L997.5 471" stroke="#00ff00" stroke-width="1" />
<path d="M1013.5 448.5L1044.5 448.5" stroke="#00ff00" stroke-width="1" />
<path d="M1028.5 468L1028.5 471" stroke="#00ff00" stroke-width="1" />
<path d="M1044.5 448.5L1074.5 448.5" stroke="#00ff00" stroke-width="1" />
<path d="M1058.5 468L1058.5 471" stroke="#00ff00" stroke-width="1" />
<path d="M1074.5 448.5L1105.5 448.5" stroke="#00ff00" stroke-width="1" />
<path d="M1089.5 468L1089.5 471" stroke="#00ff00" stroke-width="1" />
<path d="M1105.5 448.5L1136.5 448.5" stroke="#00ff00" stroke-width="1" />
<path d="M1120.5 468L1120.5 471" stroke="#00ff00" stroke-width="1" />
<path d="M1136.5 448.5L1167.5 448.5" stroke="#00ff00" stroke-width="1" />
<path d="M1167.5 448.5L1197.5 448.5" stroke="#00ff00" stroke-width="1" />
<path d="M1197.5 448.5L1228.5 448.5" stroke="#00ff00" stroke-width="1" />
<path d="M1212.5 468L1212.5 471" stroke="#00ffff" stroke-width="1" />
<path d="M1228.5 448.5L1259.5 448.5" stroke="#00ff00" stroke-width="1" />
<path d="M1243.5 468L1243.5 471" stroke="#00ff00" stroke-width="1" />
<path d="M1259.5 448.5L1290.5 448.5" stroke="#00ff00" stroke-width="1" />
<path d="M1274.5 468L1274.5 471" stroke="#00ffff" stroke-width="1" />
<path d="M1290.5 448.5L1320.5 448.5" stroke="#00ff00" stroke-width="1" />
<path d="M1304.5 468L1304.5 471" stroke="#00ffff" stroke-width="1" />
<path d="M1320.5 448.5L1351.5 448.5" stroke="#00ff00" stroke-width="1" />
<path d="M1335.5 468L1335.5 471" stroke="#00ffff" stroke-width="1" />
<path d="M1351.5 448.5L1382.5 448.5" stroke="#00ff00" stroke-width="1" />
<path d="M1366.5 468L1366.5 471" stroke="#00ffff" stroke-width="1" />
<path d="M1382.5 448.5L1413.5 448.5" stroke="#00ff00" stroke-width="1" />
<path d="M1397.5 468L1397.5 471" stroke="#00ffff" stroke-width="1" />
<path d="M1413.5 448.5L1443.5 448.5" stroke="#00ff00" stroke-width="1" />
<path d="M1428.5 468L1428.5 471" stroke="#00ff00" stroke-width="1" />
</g>
<g class="lab" fill="#ffff00"  stroke="#ffff00" stroke-width="0.6" font-weight="200" font-family="'DejaVu Sans Light','DejaVu Sans', sans-serif">
<text x="405.5" y="387.2" font-size="16.4" textLength="22" lengthAdjust="spacingAndGlyphs">33D</text>
<text x="436.3" y="387.2" font-size="16.4" textLength="22" lengthAdjust="spacingAndGlyphs">34D</text>
<text x="467.0" y="387.2" font-size="16.4" textLength="22" lengthAdjust="spacingAndGlyphs">35D</text>
<text x="497.8" y="387.2" font-size="16.4" textLength="22" lengthAdjust="spacingAndGlyphs">36D</text>
<text x="528.6" y="387.2" font-size="16.4" textLength="22" lengthAdjust="spacingAndGlyphs">37D</text>
<text x="559.3" y="387.2" font-size="16.4" textLength="22" lengthAdjust="spacingAndGlyphs">38D</text>
<text x="590.1" y="387.2" font-size="16.4" textLength="22" lengthAdjust="spacingAndGlyphs">39D</text>
<text x="620.9" y="387.2" font-size="16.4" textLength="22" lengthAdjust="spacingAndGlyphs">40D</text>
<text x="651.7" y="387.2" font-size="16.4" textLength="22" lengthAdjust="spacingAndGlyphs">41D</text>
<text x="682.4" y="387.2" font-size="16.4" textLength="22" lengthAdjust="spacingAndGlyphs">42D</text>
<text x="713.2" y="387.2" font-size="16.4" textLength="22" lengthAdjust="spacingAndGlyphs">43D</text>
<text x="744.0" y="387.2" font-size="16.4" textLength="22" lengthAdjust="spacingAndGlyphs">44D</text>
<text x="774.7" y="387.2" font-size="16.4" textLength="22" lengthAdjust="spacingAndGlyphs">45D</text>
<text x="805.5" y="387.2" font-size="16.4" textLength="22" lengthAdjust="spacingAndGlyphs">46D</text>
<text x="836.3" y="387.2" font-size="16.4" textLength="22" lengthAdjust="spacingAndGlyphs">47D</text>
<text x="867.0" y="387.2" font-size="16.4" textLength="22" lengthAdjust="spacingAndGlyphs">48D</text>
<text x="409.5" y="464.8" font-size="16.4" textLength="14" lengthAdjust="spacingAndGlyphs">1D</text>
<text x="440.3" y="464.8" font-size="16.4" textLength="14" lengthAdjust="spacingAndGlyphs">2D</text>
<text x="471.0" y="464.8" font-size="16.4" textLength="14" lengthAdjust="spacingAndGlyphs">3D</text>
<text x="501.8" y="464.8" font-size="16.4" textLength="14" lengthAdjust="spacingAndGlyphs">4D</text>
<text x="532.6" y="464.8" font-size="16.4" textLength="14" lengthAdjust="spacingAndGlyphs">5D</text>
<text x="563.3" y="464.8" font-size="16.4" textLength="14" lengthAdjust="spacingAndGlyphs">6D</text>
<text x="594.1" y="464.8" font-size="16.4" textLength="14" lengthAdjust="spacingAndGlyphs">7D</text>
<text x="624.9" y="464.8" font-size="16.4" textLength="14" lengthAdjust="spacingAndGlyphs">8D</text>
<text x="655.7" y="464.8" font-size="16.4" textLength="14" lengthAdjust="spacingAndGlyphs">9D</text>
<text x="682.4" y="464.8" font-size="16.4" textLength="22" lengthAdjust="spacingAndGlyphs">10D</text>
<text x="713.2" y="464.8" font-size="16.4" textLength="22" lengthAdjust="spacingAndGlyphs">11D</text>
<text x="744.0" y="464.8" font-size="16.4" textLength="22" lengthAdjust="spacingAndGlyphs">12D</text>
<text x="774.7" y="464.8" font-size="16.4" textLength="22" lengthAdjust="spacingAndGlyphs">13D</text>
<text x="805.5" y="464.8" font-size="16.4" textLength="22" lengthAdjust="spacingAndGlyphs">14D</text>
<text x="836.3" y="464.8" font-size="16.4" textLength="22" lengthAdjust="spacingAndGlyphs">15D</text>
<text x="867.0" y="464.8" font-size="16.4" textLength="22" lengthAdjust="spacingAndGlyphs">16D</text>
<text x="956.0" y="387.2" font-size="16.4" textLength="22" lengthAdjust="spacingAndGlyphs">49D</text>
<text x="986.8" y="387.2" font-size="16.4" textLength="22" lengthAdjust="spacingAndGlyphs">50D</text>
<text x="1017.5" y="387.2" font-size="16.4" textLength="22" lengthAdjust="spacingAndGlyphs">51D</text>
<text x="1048.3" y="387.2" font-size="16.4" textLength="22" lengthAdjust="spacingAndGlyphs">52D</text>
<text x="1079.1" y="387.2" font-size="16.4" textLength="22" lengthAdjust="spacingAndGlyphs">53D</text>
<text x="1109.8" y="387.2" font-size="16.4" textLength="22" lengthAdjust="spacingAndGlyphs">54D</text>
<text x="1140.6" y="387.2" font-size="16.4" textLength="22" lengthAdjust="spacingAndGlyphs">55D</text>
<text x="1171.4" y="387.2" font-size="16.4" textLength="22" lengthAdjust="spacingAndGlyphs">56D</text>
<text x="1202.2" y="387.2" font-size="16.4" textLength="22" lengthAdjust="spacingAndGlyphs">57D</text>
<text x="1232.9" y="387.2" font-size="16.4" textLength="22" lengthAdjust="spacingAndGlyphs">58D</text>
<text x="1263.7" y="387.2" font-size="16.4" textLength="22" lengthAdjust="spacingAndGlyphs">59D</text>
<text x="1294.5" y="387.2" font-size="16.4" textLength="22" lengthAdjust="spacingAndGlyphs">60D</text>
<text x="1325.2" y="387.2" font-size="16.4" textLength="22" lengthAdjust="spacingAndGlyphs">61D</text>
<text x="1356.0" y="387.2" font-size="16.4" textLength="22" lengthAdjust="spacingAndGlyphs">62D</text>
<text x="1386.8" y="387.2" font-size="16.4" textLength="22" lengthAdjust="spacingAndGlyphs">63D</text>
<text x="1417.5" y="387.2" font-size="16.4" textLength="22" lengthAdjust="spacingAndGlyphs">64D</text>
<text x="956.0" y="464.8" font-size="16.4" textLength="22" lengthAdjust="spacingAndGlyphs">17D</text>
<text x="986.8" y="464.8" font-size="16.4" textLength="22" lengthAdjust="spacingAndGlyphs">18D</text>
<text x="1017.5" y="464.8" font-size="16.4" textLength="22" lengthAdjust="spacingAndGlyphs">19D</text>
<text x="1048.3" y="464.8" font-size="16.4" textLength="22" lengthAdjust="spacingAndGlyphs">20D</text>
<text x="1079.1" y="464.8" font-size="16.4" textLength="22" lengthAdjust="spacingAndGlyphs">21D</text>
<text x="1109.8" y="464.8" font-size="16.4" textLength="22" lengthAdjust="spacingAndGlyphs">22D</text>
<text x="1140.6" y="464.8" font-size="16.4" textLength="22" lengthAdjust="spacingAndGlyphs">23D</text>
<text x="1171.4" y="464.8" font-size="16.4" textLength="22" lengthAdjust="spacingAndGlyphs">24D</text>
<text x="1202.2" y="464.8" font-size="16.4" textLength="22" lengthAdjust="spacingAndGlyphs">25D</text>
<text x="1232.9" y="464.8" font-size="16.4" textLength="22" lengthAdjust="spacingAndGlyphs">26D</text>
<text x="1263.7" y="464.8" font-size="16.4" textLength="22" lengthAdjust="spacingAndGlyphs">27D</text>
<text x="1294.5" y="464.8" font-size="16.4" textLength="22" lengthAdjust="spacingAndGlyphs">28D</text>
<text x="1325.2" y="464.8" font-size="16.4" textLength="22" lengthAdjust="spacingAndGlyphs">29D</text>
<text x="1356.0" y="464.8" font-size="16.4" textLength="22" lengthAdjust="spacingAndGlyphs">30D</text>
<text x="1386.8" y="464.8" font-size="16.4" textLength="22" lengthAdjust="spacingAndGlyphs">31D</text>
<text x="1417.5" y="464.8" font-size="16.4" textLength="22" lengthAdjust="spacingAndGlyphs">32D</text>
</g>
<g shape-rendering="crispEdges" fill="#ee2424"><rect x="401.0" y="382" width="8.5" height="9"/><rect x="431.0" y="382" width="8.5" height="9"/><rect x="462.0" y="382" width="8.5" height="9"/><rect x="493.0" y="382" width="8.5" height="9"/><rect x="524.0" y="382" width="8.5" height="9"/><rect x="555.0" y="382" width="8.5" height="9"/><rect x="585.0" y="382" width="8.5" height="9"/><rect x="616.0" y="382" width="8.5" height="9"/><rect x="647.0" y="382" width="8.5" height="9"/><rect x="678.0" y="382" width="8.5" height="9"/><rect x="708.0" y="382" width="8.5" height="9"/><rect x="739.0" y="382" width="8.5" height="9"/><rect x="404.0" y="460" width="8.5" height="8"/><rect x="434.0" y="460" width="8.5" height="8"/><rect x="465.0" y="460" width="8.5" height="8"/><rect x="496.0" y="460" width="8.5" height="8"/><rect x="527.0" y="460" width="8.5" height="8"/><rect x="558.0" y="460" width="8.5" height="8"/><rect x="588.0" y="460" width="8.5" height="8"/><rect x="619.0" y="460" width="8.5" height="8"/><rect x="650.0" y="460" width="8.5" height="8"/><rect x="678.0" y="460" width="8.5" height="8"/><rect x="708.0" y="460" width="8.5" height="8"/><rect x="951.0" y="382" width="8.5" height="9"/><rect x="982.0" y="382" width="8.5" height="9"/><rect x="1013.0" y="382" width="8.5" height="9"/><rect x="1044.0" y="382" width="8.5" height="9"/><rect x="1074.0" y="382" width="8.5" height="9"/><rect x="1105.0" y="382" width="8.5" height="9"/><rect x="1136.0" y="382" width="8.5" height="9"/><rect x="1167.0" y="382" width="8.5" height="9"/><rect x="1197.0" y="382" width="8.5" height="9"/><rect x="951.0" y="460" width="8.5" height="8"/><rect x="982.0" y="460" width="8.5" height="8"/><rect x="1013.0" y="460" width="8.5" height="8"/><rect x="1044.0" y="460" width="8.5" height="8"/><rect x="1074.0" y="460" width="8.5" height="8"/><rect x="1105.0" y="460" width="8.5" height="8"/><rect x="1136.0" y="460" width="8.5" height="8"/><rect x="1228.0" y="460" width="8.5" height="8"/><rect x="1259.0" y="460" width="8.5" height="8"/><rect x="1290.0" y="460" width="8.5" height="8"/><rect x="1320.0" y="460" width="8.5" height="8"/><rect x="1351.0" y="460" width="8.5" height="8"/><rect x="1382.0" y="460" width="8.5" height="8"/><rect x="1413.0" y="460" width="8.5" height="8"/></g>
<g shape-rendering="crispEdges" stroke="#ff0000" fill="none" stroke-dasharray="8 3 2 3"><path d="M300 756.5H1564"/><path d="M1110.5 756.5V826"/></g>
<g shape-rendering="crispEdges"><rect x="354" y="725" width="2" height="45" fill="#00d2a0"/><rect x="355" y="770" width="46" height="2" fill="#ff0000"/></g>
<g fill="#808080" font-family="'Liberation Sans', sans-serif" font-weight="bold" font-size="14.5" text-anchor="middle"><text transform="translate(355 717) scale(1.28 1)">Y</text><text transform="translate(355 776.6) scale(1.3 1)">Z</text><text transform="translate(413.7 776.6) scale(1.2 1)">X</text></g>
<rect x="1455" y="64" width="52" height="51" fill="#f2f2f2"/><rect x="1456" y="65" width="50" height="49" fill="#e0e0e0"/><rect x="1456" y="65" width="50" height="49" rx="9" fill="#e9e9e9"/>
 <text x="1481.5" y="99.3" font-size="23.5" fill="#a4a4a4" text-anchor="middle" font-family="'Liberation Sans','Noto Sans CJK SC', sans-serif" font-weight="300">上</text>
</svg>
<div id="cmd" class="abs">
  <span class="abs" style="left:16px;top:0px;line-height:32px;font-size:12px;color:#707070;">在此输入命令</span>
</div>
<svg class="abs" style="left:298px;top:826px" width="1266" height="32" viewBox="298 826 1266 32">
<g fill="#9a9a9a"><rect x="302.2" y="835.4" width="1.7" height="1.7"/><rect x="302.2" y="839.2" width="1.7" height="1.7"/><rect x="302.2" y="843.1" width="1.7" height="1.7"/><rect x="302.2" y="847.1" width="1.7" height="1.7"/></g>
<path d="M912.5 834V851" stroke="#cfcfcf" stroke-width="1" shape-rendering="crispEdges"/>
<path d="M1218.5 834V851" stroke="#cfcfcf" stroke-width="1" shape-rendering="crispEdges"/>
<path d="M1330.5 834V851" stroke="#cfcfcf" stroke-width="1" shape-rendering="crispEdges"/>
<path d="M1364.5 834V851" stroke="#cfcfcf" stroke-width="1" shape-rendering="crispEdges"/>
<path d="M1424.5 834V851" stroke="#cfcfcf" stroke-width="1" shape-rendering="crispEdges"/>
<path d="M925 845l4-4.2 4 4.2" stroke="#14496b" stroke-width="1.5" fill="none"/>
<rect x="948.2" y="835.2" width="1.7" height="1.7" fill="#9a9a9a"/>
<rect x="948.2" y="839.2" width="1.7" height="1.7" fill="#9a9a9a"/>
<rect x="948.2" y="843.2" width="1.7" height="1.7" fill="#9a9a9a"/>
<rect x="948.2" y="847.2" width="1.7" height="1.7" fill="#9a9a9a"/>
<rect x="1460.0" y="835.2" width="1.7" height="1.7" fill="#9a9a9a"/>
<rect x="1460.0" y="839.2" width="1.7" height="1.7" fill="#9a9a9a"/>
<rect x="1460.0" y="843.2" width="1.7" height="1.7" fill="#9a9a9a"/>
<rect x="1460.0" y="847.2" width="1.7" height="1.7" fill="#9a9a9a"/>
<path d="M942 827h4l-2 2zM942 858h4l-2-2z" fill="#dcdcdc"/>
<path d="M1454 827h4l-2 2zM1454 858h4l-2-2z" fill="#dcdcdc"/>
<rect x="960.6" y="835.6" width="12.8" height="15" fill="#fff" stroke="#14496b" stroke-width="1.4"/>
<rect x="962.4" y="837" width="9.6" height="7" fill="#e2f5f8"/>
<circle cx="967.4" cy="839.9" r="3" fill="#fff" stroke="#23a3b3" stroke-width="1.1"/><path d="M967.4 838.2v1M967.4 840.2v1.6" stroke="#23a3b3" stroke-width="1"/>
<path d="M963.2 844.5h7.8M963.2 847.5h7.8" stroke="#23a3b3" stroke-width="1"/>
<path d="M986.7 840l8-4.3 4.5 1.6v9l-8.5 4.6-4-1.7z" fill="#d8eef2" stroke="#14496b" stroke-width="1.3" stroke-linejoin="round"/>
<path d="M986.7 840l4 1.6 8.5-4.3M990.7 841.6v9.3" stroke="#fff" stroke-width="0.9" fill="none" opacity="0.9"/>
<circle cx="996.5" cy="846.5" r="4.1" fill="#fff" stroke="#23a3b3" stroke-width="1.2"/><path d="M996.5 846v2.8" stroke="#23a3b3" stroke-width="1.2"/><circle cx="996.5" cy="844.5" r="0.75" fill="#23a3b3"/>
<path d="M1019 835.0999999999999l3.2190000000000003 1.85v3.7l-3.2190000000000003 1.85l-3.2190000000000003 -1.85v-3.7z" fill="#d8eef2" stroke="#14496b" stroke-width="1.1" stroke-linejoin="round"/>
<path d="M1016.381 837.4499999999999l2.619 1.55v2.9000000000000004l-2.619 -1.4500000000000002z" fill="#a9c4c9"/>
<path d="M1015.1 841.8l3.2190000000000003 1.85v3.7l-3.2190000000000003 1.85l-3.2190000000000003 -1.85v-3.7z" fill="#d8eef2" stroke="#14496b" stroke-width="1.1" stroke-linejoin="round"/>
<path d="M1012.481 844.15l2.619 1.55v2.9000000000000004l-2.619 -1.4500000000000002z" fill="#a9c4c9"/>
<path d="M1023 841.8l3.2190000000000003 1.85v3.7l-3.2190000000000003 1.85l-3.2190000000000003 -1.85v-3.7z" fill="#d8eef2" stroke="#14496b" stroke-width="1.1" stroke-linejoin="round"/>
<path d="M1020.381 844.15l2.619 1.55v2.9000000000000004l-2.619 -1.4500000000000002z" fill="#a9c4c9"/>
<g fill="#f0fdff" stroke="#14496b" stroke-width="1.2"><rect x="1037.5" y="835.6" width="11" height="2.8" rx="1"/><rect x="1042.2" y="840.6" width="10.6" height="2.8" rx="1"/><rect x="1042.2" y="845.8" width="10.6" height="2.8" rx="1"/><path d="M1039.6 838.4v11.4M1039.6 842h2.6M1039.6 847.2h2.6" fill="none"/></g>
<rect x="1064.6" y="835.6" width="12.8" height="15" fill="#fff" stroke="#14496b" stroke-width="1.4"/>
<rect x="1066.4" y="837" width="9.6" height="7" fill="#e2f5f8"/>
<circle cx="1071.4" cy="839.9" r="3" fill="#fff" stroke="#23a3b3" stroke-width="1.1"/><path d="M1071.4 838.2v1M1071.4 840.2v1.6" stroke="#23a3b3" stroke-width="1"/>
<path d="M1067.2 844.5h7.8M1067.2 847.5h7.8" stroke="#23a3b3" stroke-width="1"/>
<path d="M1072.3 844l5.3 5.3" stroke="#f39a1e" stroke-width="2"/><path d="M1077 848.7l1.3 1.3" stroke="#f5a0b0" stroke-width="2"/><path d="M1071.4 843.2l1.6 0.4-1.2 1.2z" fill="#14496b"/>
<path d="M1090.4 840l8-4.3 4.5 1.6v9l-8.5 4.6-4-1.7z" fill="#d8eef2" stroke="#14496b" stroke-width="1.3" stroke-linejoin="round"/>
<path d="M1090.4 840l4 1.6 8.5-4.3M1094.4 841.6v9.3" stroke="#fff" stroke-width="0.9" fill="none" opacity="0.9"/>
<path d="M1097.5 842.5l1.8 0-0.9 2.6z" fill="#14496b"/>
<path d="M1116.2 840l8-4.3 4.5 1.6v9l-8.5 4.6-4-1.7z" fill="#d8eef2" stroke="#14496b" stroke-width="1.3" stroke-linejoin="round"/>
<path d="M1116.2 840l4 1.6 8.5-4.3M1120.2 841.6v9.3" stroke="#fff" stroke-width="0.9" fill="none" opacity="0.9"/>
<rect x="1120.2" y="844.6" width="10.6" height="6" rx="0.8" fill="#e8f7f9" stroke="#23a3b3" stroke-width="1.2"/><path d="M1122.1 849.4l0.9-2.8h0.7l0.9 2.8M1125.9 846.6h3.4M1125.9 848.6h3.4" stroke="#23a3b3" stroke-width="0.9" fill="none"/>
<path d="M1142.3 840l8-4.3 4.5 1.6v9l-8.5 4.6-4-1.7z" fill="#d8eef2" stroke="#14496b" stroke-width="1.3" stroke-linejoin="round"/>
<path d="M1142.3 840l4 1.6 8.5-4.3M1146.3 841.6v9.3" stroke="#fff" stroke-width="0.9" fill="none" opacity="0.9"/>
<rect x="1146.3" y="844.6" width="10.6" height="6" rx="0.8" fill="#e8f7f9" stroke="#23a3b3" stroke-width="1.2"/><path d="M1148.1999999999998 849.4l0.9-2.8h0.7l0.9 2.8M1152.0 846.6h3.4M1152.0 848.6h3.4" stroke="#23a3b3" stroke-width="0.9" fill="none"/>
<path d="M1170.2 838.3l-2.2 0.9v9.6l3.8 1.8 8.4-4.6v-2.6" fill="#d8eef2" stroke="none"/>
<path d="M1170.2 838.3l-2.2 0.9v9.6l3.8 1.8 8.4-4.6v-2.6" fill="none" stroke="#14496b" stroke-width="1.3" stroke-linejoin="round" stroke-linecap="round"/>
<rect x="1172.1" y="835.6" width="10.4" height="5.6" rx="0.8" fill="#d9f0f3" stroke="#23a3b3" stroke-width="1.3"/><path d="M1174.0 837.4v2M1176.0 837.4v2M1178.0 837.4v2M1180.0 837.4v2" stroke="#23a3b3" stroke-width="0.9"/>
<path d="M1175.4 843.2h2.4l-1.2 2z" fill="#14496b"/>
<path d="M1196.2 838.3l-2.2 0.9v9.6l3.8 1.8 2.4-1.2" fill="#d8eef2" stroke="none"/>
<path d="M1196.2 838.3l-2.2 0.9v9.6l3.8 1.8 2.4-1.2" fill="none" stroke="#14496b" stroke-width="1.3" stroke-linejoin="round" stroke-linecap="round"/>
<rect x="1198.1" y="835.6" width="10.4" height="5.6" rx="0.8" fill="#d9f0f3" stroke="#23a3b3" stroke-width="1.3"/><path d="M1200.0 837.4v2M1202.0 837.4v2M1204.0 837.4v2M1206.0 837.4v2" stroke="#23a3b3" stroke-width="0.9"/>
<circle cx="1203.6" cy="846" r="2.6" fill="#e8f7f9" stroke="#23a3b3" stroke-width="1.2"/><path d="M1205.5 848l2.2 2.2" stroke="#23a3b3" stroke-width="1.3"/>
<path d="M1228.4 836.0q3 2.4 5 2.6h4q2-0.2 5-2.6" fill="none" stroke="#14496b" stroke-width="1.2"/><rect x="1232.6" y="837.2" width="5.6" height="3" rx="1.2" fill="#d8eef2" stroke="#14496b" stroke-width="1.1"/>
<path d="M1228.4 841.0q3 2.4 5 2.6h4q2-0.2 5-2.6" fill="none" stroke="#14496b" stroke-width="1.2"/><rect x="1232.6" y="842.2" width="5.6" height="3" rx="1.2" fill="#d8eef2" stroke="#14496b" stroke-width="1.1"/>
<path d="M1228.4 846.0q3 2.4 5 2.6h4q2-0.2 5-2.6" fill="none" stroke="#14496b" stroke-width="1.2"/><rect x="1232.6" y="847.2" width="5.6" height="3" rx="1.2" fill="#d8eef2" stroke="#14496b" stroke-width="1.1"/>
<path d="M1256 837h10" stroke="#14496b" stroke-width="1.6"/><circle cx="1255" cy="837" r="1.6" fill="#fff" stroke="#14496b" stroke-width="1"/><circle cx="1267.2" cy="837" r="1.6" fill="#fff" stroke="#14496b" stroke-width="1"/>
<path d="M1256 843h10" stroke="#23a3b3" stroke-width="1.6"/><circle cx="1255" cy="843" r="1.6" fill="#fff" stroke="#23a3b3" stroke-width="1"/><circle cx="1267.2" cy="843" r="1.6" fill="#fff" stroke="#23a3b3" stroke-width="1"/>
<path d="M1256 849h10" stroke="#14496b" stroke-width="1.6"/><circle cx="1255" cy="849" r="1.6" fill="#fff" stroke="#14496b" stroke-width="1"/><circle cx="1267.2" cy="849" r="1.6" fill="#fff" stroke="#14496b" stroke-width="1"/>
<path d="M1282.5 835v9" stroke="#f04a4a" stroke-width="1.1"/><rect x="1281.3" y="842" width="2.4" height="2.6" fill="#fff" stroke="#14496b" stroke-width="0.9"/>
<path d="M1286.7 835v9" stroke="#23a3b3" stroke-width="1.1"/><rect x="1285.5" y="842" width="2.4" height="2.6" fill="#fff" stroke="#14496b" stroke-width="0.9"/>
<path d="M1290.7 835v9" stroke="#f5a21e" stroke-width="1.1"/><rect x="1289.5" y="842" width="2.4" height="2.6" fill="#fff" stroke="#14496b" stroke-width="0.9"/>
<path d="M1279.6 845.6l-0.8 0.8v3.2l0.8 0.8h14l0.8-0.8v-3.2l-0.8-0.8z" fill="#14496b"/><path d="M1281.4 848h10.6" stroke="#9fd8e0" stroke-width="1.2" stroke-dasharray="1.6 0.5"/>
<g font-family="'Liberation Sans',sans-serif" font-size="8" fill="#14496b"><text x="1306.6" y="842">A</text><text x="1313.6" y="842">B</text><text x="1306.4" y="849.6">C</text></g>
<path d="M1315 844.2a3.2 3.2 0 0 0 0 5.6M1318.4 844.2a3.2 3.2 0 0 1 0 5.6" fill="none" stroke="#23a3b3" stroke-width="1.2"/><path d="M1314 843.6h2.4l-0.4 2.2zM1319.4 850.6h-2.4l0.4-2.2z" fill="#23a3b3"/>
<path d="M1341.6 837.4l-2.4 7 2.6 4.2 6-2.6" fill="none" stroke="#14496b" stroke-width="1.1" stroke-linejoin="round"/><path d="M1342 839l-1.8 5.6 2 3 3-1.4 1-4z" fill="#d8eef2"/>
<rect x="1344.8999999999999" y="835.6" width="10.4" height="5.6" rx="0.8" fill="#d9f0f3" stroke="#23a3b3" stroke-width="1.3"/><path d="M1346.8 837.4v2M1348.8 837.4v2M1350.8 837.4v2M1352.8 837.4v2" stroke="#23a3b3" stroke-width="0.9"/>
<path d="M1352 851v-5.5" stroke="#23a3b3" stroke-width="1.2"/><path d="M1349.6 846.6l2.4-3.4 2.4 3.4z" fill="#23a3b3"/><path d="M1346 843.4h2l-1 1.6z" fill="#14496b"/>
<path d="M1373 838.5h16M1373 844.5h16" stroke="#14496b" stroke-width="1.2" shape-rendering="crispEdges"/><path d="M1374.5 835v12.2M1374.5 849.2v1.6" stroke="#14496b" stroke-width="1.2"/><path d="M1383.6 835v12.2M1383.6 849.2v1.6" stroke="#23a3b3" stroke-width="1.2"/>
<g transform="rotate(-45 1407 843)"><rect x="1399.3" y="839.6" width="15.4" height="6.8" rx="0.8" fill="#d8eef2" stroke="#14496b" stroke-width="1.3"/><path d="M1402.4 840v3M1405.4 840v3M1408.4 840v3M1411.4 840v3" stroke="#23a3b3" stroke-width="1"/></g>
<path d="M1434.5 835v14.6h14.5" fill="none" stroke="#14496b" stroke-width="1.3"/><path d="M1433.4 849.6l1.1 1.1" stroke="#14496b" stroke-width="1.2"/>
<path d="M1438 839l2-1.8h8v7l-2 1.8h-8z" fill="#d8eef2" stroke="#14496b" stroke-width="1.2" stroke-linejoin="round"/><path d="M1446 839l2-1.8v7l-2 1.8z" fill="#a8bcc0"/>
<path d="M1473 847.6l10-10" stroke="#14496b" stroke-width="1.2"/><path d="M1480.2 837.8l5 4.4M1472.4 845l5 4.6" stroke="#14496b" stroke-width="1.1"/>
<circle cx="1504.8" cy="843" r="7.4" fill="#dff3f6" stroke="#14496b" stroke-width="1.2"/><path d="M1498.8 843h12" stroke="#23a3b3" stroke-width="1.2"/><circle cx="1504.8" cy="843" r="1.2" fill="#23a3b3"/><circle cx="1499.2" cy="843" r="0.9" fill="#23a3b3"/><circle cx="1510.4" cy="843" r="0.9" fill="#23a3b3"/>
<circle cx="1530.5" cy="843" r="7.2" fill="#dff3f6" stroke="#14496b" stroke-width="1.2"/><path d="M1530.5 843h5" stroke="#23a3b3" stroke-width="1.3"/><circle cx="1530.5" cy="843" r="1.2" fill="#23a3b3"/><path d="M1535 841l2.8 2-2.8 2z" fill="#23a3b3"/>
<path d="M1549.4 850.8h8" stroke="#14496b" stroke-width="1.2"/><path d="M1555.4 850a10.5 10.5 0 0 1 10-10" fill="none" stroke="#14496b" stroke-width="1.3"/><path d="M1551.6 847.6a13 13 0 0 1 11-11.4" fill="none" stroke="#23a3b3" stroke-width="1.1"/><path d="M1550 846.2l1.6 3 1.8-2.8zM1561.6 834.6l2.6 1.6-2.8 1.6z" fill="#23a3b3"/>
</svg>
</body>
</html>
